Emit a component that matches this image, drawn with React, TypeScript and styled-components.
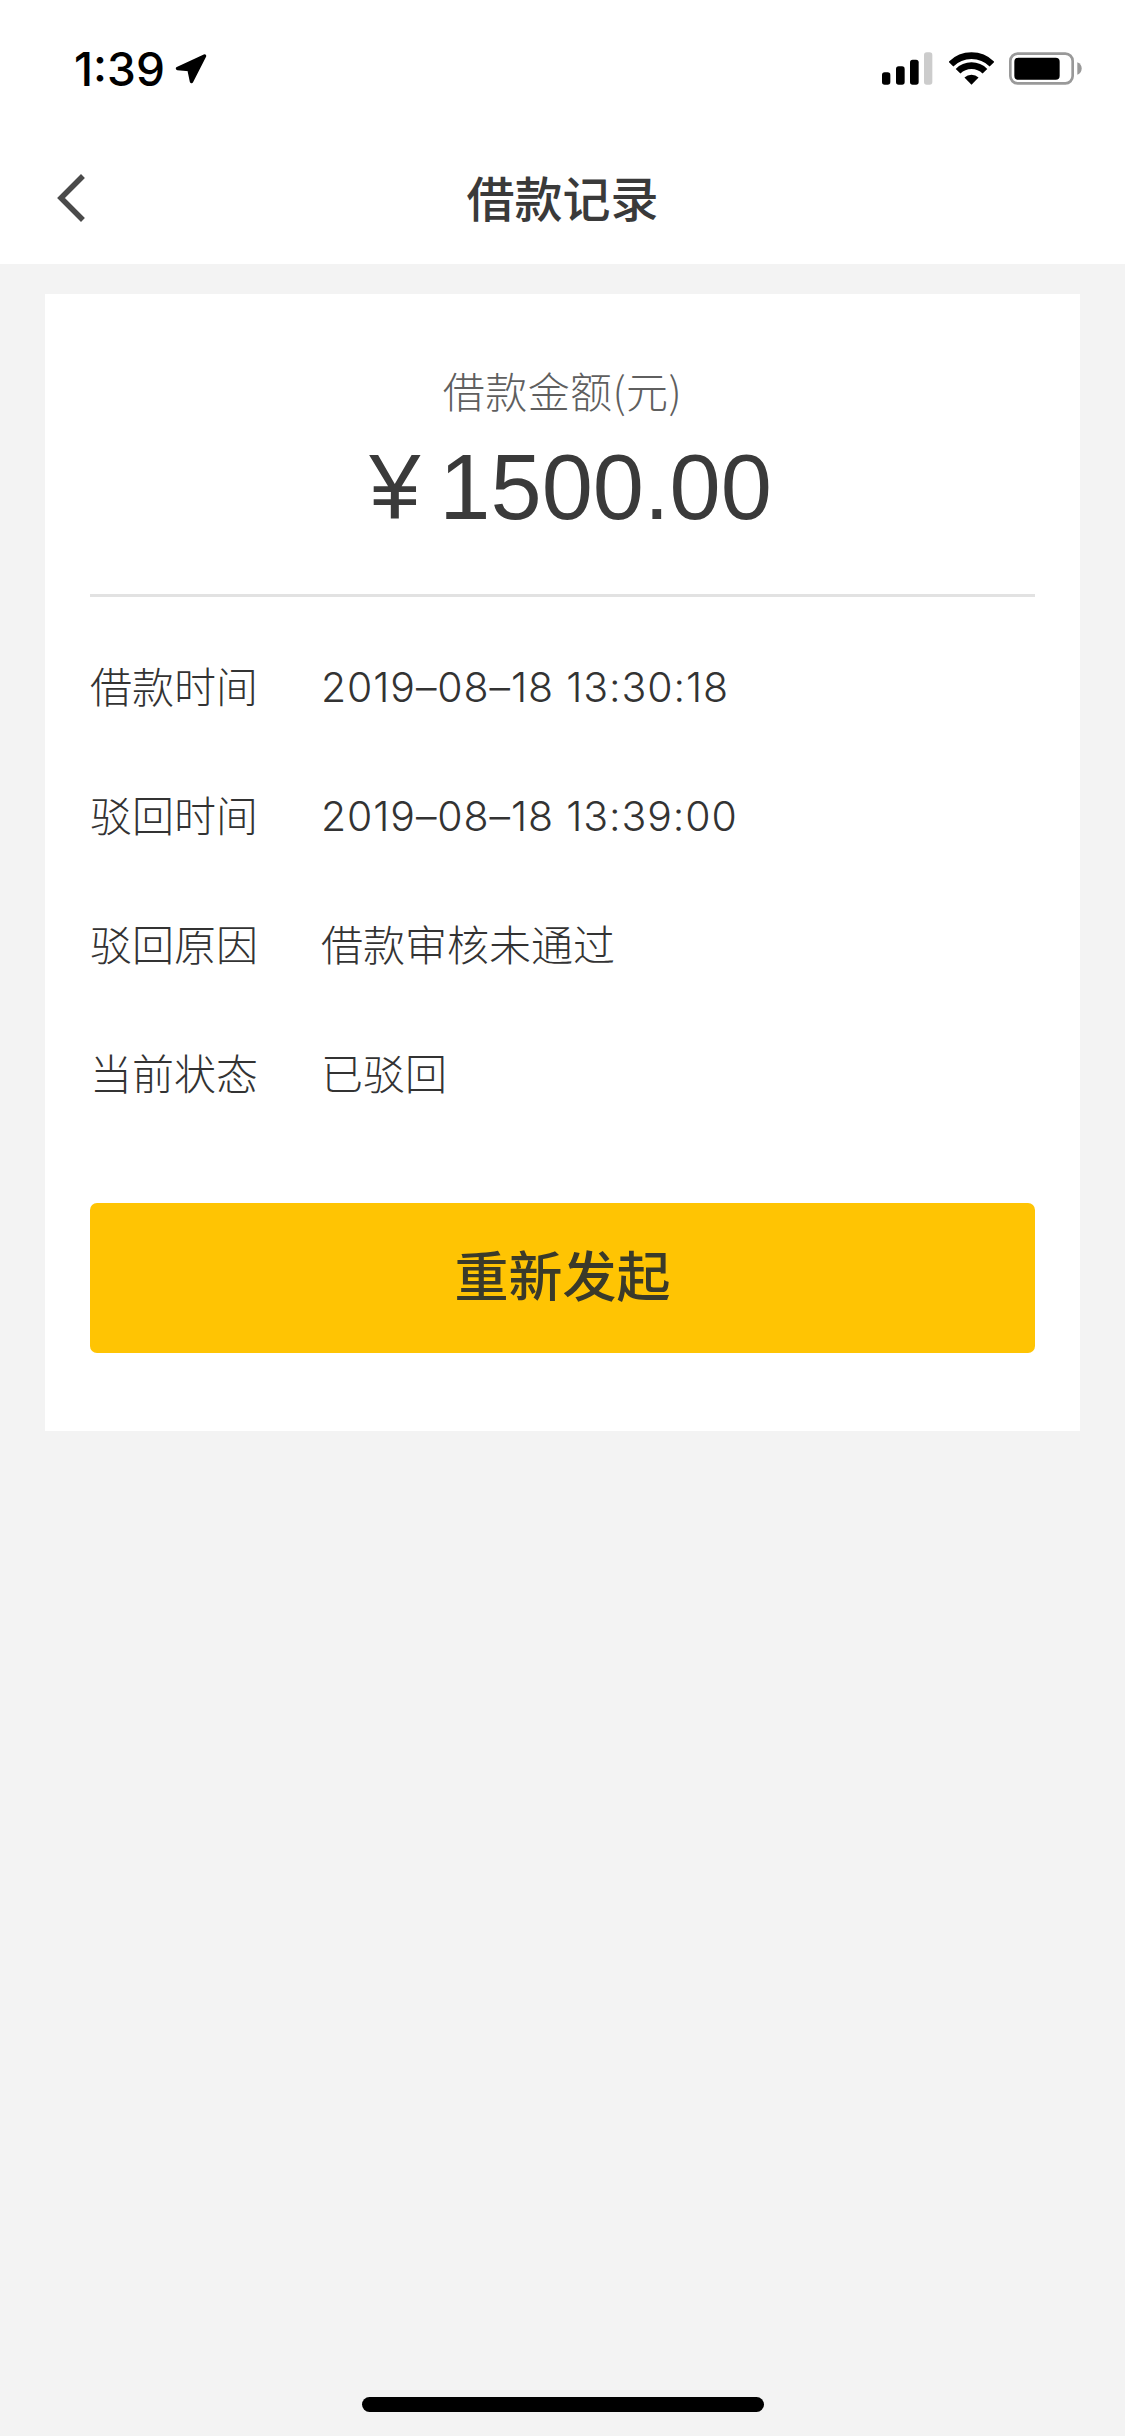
import React from "react";
import styled, { createGlobalStyle } from "styled-components";

const FONT = `"Liberation Sans", "Noto Sans CJK SC", sans-serif`;

const GlobalStyle = createGlobalStyle`
  html, body {
    margin: 0;
    padding: 0;
    background: #f3f3f3;
  }
  * {
    box-sizing: border-box;
  }
`;

const rows = [
  { label: "借款时间", value: "2019–08–18 13:30:18", numeric: true },
  { label: "驳回时间", value: "2019–08–18 13:39:00", numeric: true },
  { label: "驳回原因", value: "借款审核未通过", numeric: false },
  { label: "当前状态", value: "已驳回", numeric: false },
];

const SignalIcon = () => (
  <svg width="51" height="33" viewBox="0 0 153 97">
    <rect x="0" y="60" width="25" height="37" rx="8" fill="#000" />
    <rect x="42" y="42" width="26" height="55" rx="8" fill="#000" />
    <rect x="84" y="22" width="26" height="75" rx="8" fill="#000" />
    <rect x="126" y="0" width="25" height="97" rx="8" fill="#ccc" />
  </svg>
);

const WifiIcon = () => (
  <svg width="45" height="33" viewBox="0 0 135 97">
    <path d="M6 35.5 A87 87 0 0 1 129 35.5" fill="none" stroke="#000" strokeWidth="20" />
    <path d="M27.2 56.7 A57 57 0 0 1 107.8 56.7" fill="none" stroke="#000" strokeWidth="20" />
    <path d="M67.5 97 L46.3 75.8 A30 30 0 0 1 88.7 75.8 Z" fill="#000" />
  </svg>
);

const BatteryIcon = () => (
  <svg width="73" height="33" viewBox="0 0 219 97">
    <rect x="4" y="4" width="187" height="89" rx="22" fill="none" stroke="#999" strokeWidth="8" />
    <rect x="16" y="16" width="136" height="66" rx="12" fill="#000" />
    <path d="M205 30 C214 33 218 41 218 48.5 C218 56 214 64 205 67 Z" fill="#999" />
  </svg>
);

const LocationIcon = () => (
  <svg width="32" height="31" viewBox="0 0 32 31">
    <path
      d="M2.5 15.5 L29.5 3 L16.5 28.5 L14 16.5 Z"
      fill="#000"
      stroke="#000"
      strokeWidth="3.5"
      strokeLinejoin="round"
    />
  </svg>
);

const BackIcon = () => (
  <svg width="32" height="50" viewBox="0 0 32 50">
    <path
      d="M25 5 L5 25 L25 45"
      fill="none"
      stroke="#4a4a4a"
      strokeWidth="5.5"
      strokeLinecap="square"
    />
  </svg>
);

export default function App() {
  return (
    <Page>
      <GlobalStyle />
      <TopBar>
        <StatusBar>
          <TimeGroup>
            <Time>1:39</Time>
            <LocationIcon />
          </TimeGroup>
          <StatusIcons>
            <SignalIcon />
            <WifiIcon />
            <BatteryIcon />
          </StatusIcons>
        </StatusBar>
        <NavBar>
          <BackButton>
            <BackIcon />
          </BackButton>
          <Title>借款记录</Title>
        </NavBar>
      </TopBar>
      <Card>
        <Amount>
          <AmountLabel>借款金额(元)</AmountLabel>
          <AmountValue>
            <Yen>¥</Yen>1500.00
          </AmountValue>
        </Amount>
        <InfoList>
          {rows.map(row => (
            <InfoRow key={row.label}>
              <InfoLabel>{row.label}</InfoLabel>
              <InfoValue $numeric={row.numeric}>{row.value}</InfoValue>
            </InfoRow>
          ))}
        </InfoList>
        <RetryButton>重新发起</RetryButton>
      </Card>
      <HomeIndicator />
    </Page>
  );
}

const Page = styled.div`
  display: flex;
  flex-direction: column;
  width: 1125px;
  height: 2436px;
  overflow: hidden;
  background: #f3f3f3;
  font-family: ${FONT};
`;

const TopBar = styled.header`
  background: #fff;
  height: 264px;
`;

const StatusBar = styled.div`
  display: flex;
  align-items: center;
  justify-content: space-between;
  height: 136px;
  padding: 0 43px 0 74px;
`;

const TimeGroup = styled.div`
  display: flex;
  align-items: center;
  gap: 10px;
`;

const Time = styled.span`
  padding-top: 2px;
  font-family: Inter, ${FONT};
  font-size: 46px;
  font-weight: 500;
  line-height: 56px;
  color: #000;
`;

const StatusIcons = styled.div`
  display: flex;
  align-items: center;
  gap: 15.5px;
`;

const NavBar = styled.div`
  position: relative;
  display: flex;
  align-items: center;
  justify-content: center;
  height: 128px;
`;

const BackButton = styled.div`
  position: absolute;
  left: 56px;
  top: 37px;
  display: flex;
`;

const Title = styled.h1`
  margin: 0;
  padding-bottom: 8px;
  font-size: 48px;
  font-weight: 500;
  color: #3a3a3a;
`;

const Card = styled.section`
  display: flex;
  flex-direction: column;
  width: 1035px;
  height: 1137px;
  margin: 30px 0 0 45px;
  padding: 0 45px;
  background: #fff;
`;

const Amount = styled.div`
  display: flex;
  flex-direction: column;
  align-items: center;
  height: 303px;
  padding-top: 66px;
  border-bottom: 3px solid #e2e2e2;
`;

const AmountLabel = styled.div`
  font-family: "Noto Sans CJK SC", sans-serif;
  font-size: 42px;
  font-weight: 300;
  line-height: 60px;
  letter-spacing: 0.4px;
  color: #5f5f5f;
`;

const AmountValue = styled.div`
  padding-left: 16px;
  margin-top: 17px;
  font-size: 92px;
  line-height: 100px;
  color: #3a3a3a;
`;

const Yen = styled.span`
  margin-right: 19px;
`;

const InfoList = styled.div`
  display: flex;
  flex-direction: column;
  margin-top: 26px;
`;

const InfoRow = styled.div`
  display: flex;
  align-items: center;
  height: 129px;
`;

const InfoLabel = styled.span`
  width: 231px;
  padding-bottom: 6px;
  font-size: 42px;
  font-weight: 300;
  color: #333;
`;

const InfoValue = styled.span<{ $numeric: boolean }>`
  padding-bottom: ${props => (props.$numeric ? "2px" : "6px")};
  font-family: ${props => (props.$numeric ? `Inter, ${FONT}` : FONT)};
  font-size: ${props => (props.$numeric ? "41px" : "42px")};
  font-weight: 300;
  letter-spacing: ${props => (props.$numeric ? "0.9px" : "0")};
  color: #333;
`;

const RetryButton = styled.button`
  display: flex;
  align-items: center;
  justify-content: center;
  height: 150px;
  margin-top: 64px;
  padding-bottom: 10px;
  border: 0;
  border-radius: 7px;
  background: #ffc403;
  font-family: ${FONT};
  font-size: 54px;
  font-weight: 500;
  color: #3a3a2a;
`;

const HomeIndicator = styled.div`
  width: 402px;
  height: 15px;
  margin: auto auto 24px;
  border-radius: 8px;
  background: #000;
`;
